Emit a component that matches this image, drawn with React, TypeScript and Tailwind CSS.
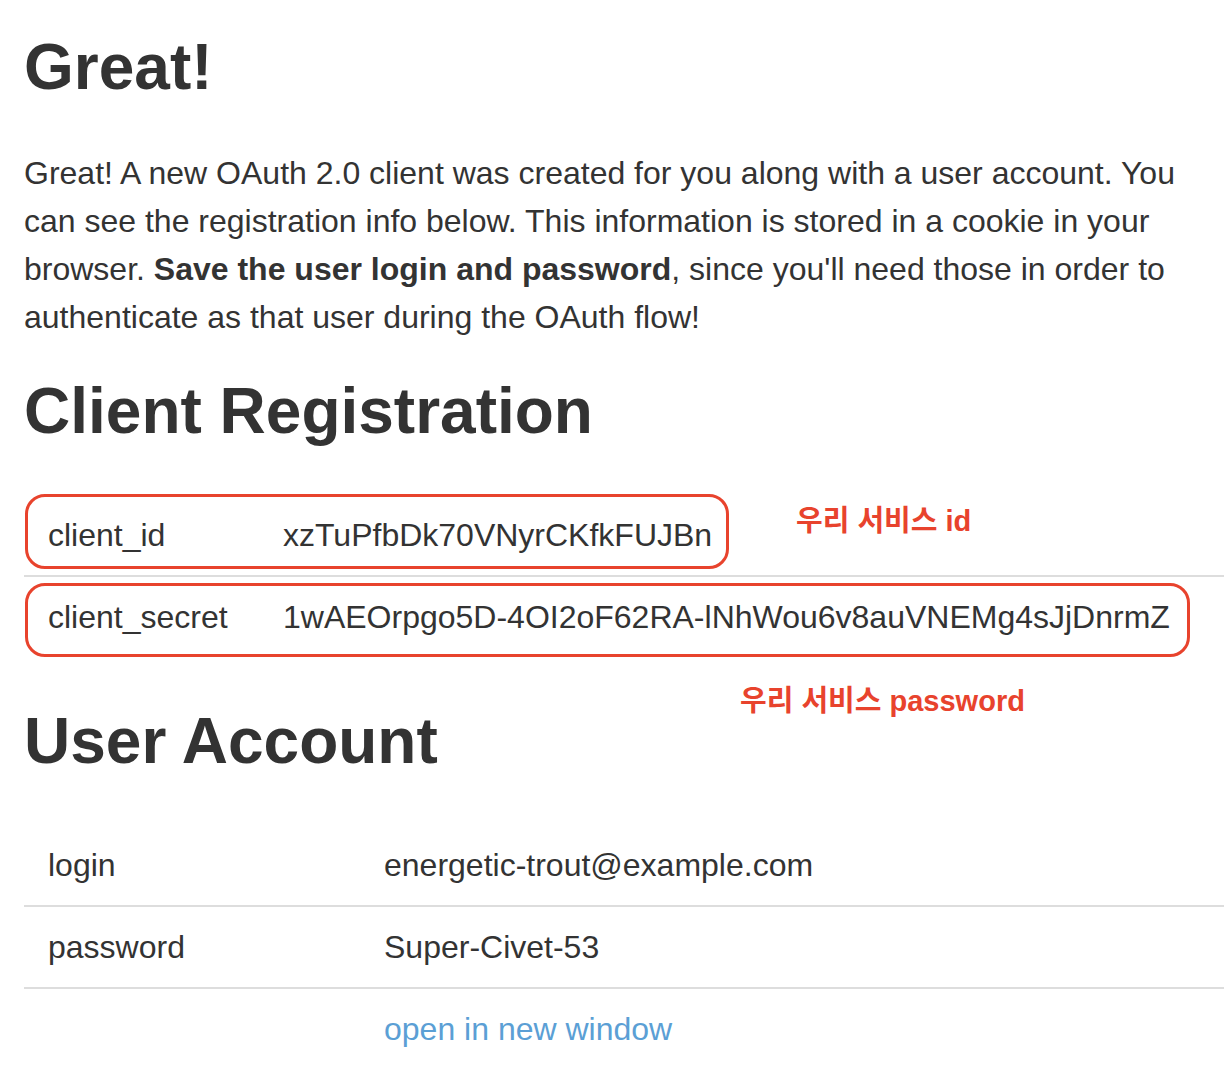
import React from "react";

const Row = ({ label, value, first, col }: { label: React.ReactNode; value: React.ReactNode; first?: boolean; col: string }) => (
  <div className={`flex ${first ? "" : "border-t-2 border-[#dddddd]"}`}>
    <div className={`${col} shrink-0 px-[24px] py-[16px]`}>{label}</div>
    <div className="flex-1 px-[24px] py-[16px] whitespace-nowrap">{value}</div>
  </div>
);

export default function App() {
  return (
    <div
      className="min-h-[1092px] bg-white text-[#333333] text-[32px] leading-[48px]"
      style={{ fontFamily: '"Liberation Sans", Arial, "Noto Sans CJK KR", sans-serif' }}
    >
      <div className="pl-[24px] w-[1224px] pt-[32px]">
        <h1 className="text-[64px] leading-[70px] font-bold">Great!</h1>
        <p className="mt-[47px]">
          Great! A new OAuth 2.0 client was created for you along with a user account. You
          <br />
          can see the registration info below. This information is stored in a cookie in your
          <br />
          browser. <strong className="font-bold">Save the user login and password</strong>, since you'll need those in order to
          <br />
          authenticate as that user during the OAuth flow!
        </p>
        <h2 className="mt-[35px] text-[64px] leading-[70px] font-bold">Client Registration</h2>

        <div className="relative mt-[49px]">
          <Row first col="w-[235px]" label="client_id" value="xzTuPfbDk70VNyrCKfkFUJBn" />
          <Row col="w-[235px]" label="client_secret" value="1wAEOrpgo5D-4OI2oF62RA-lNhWou6v8auVNEMg4sJjDnrmZ" />

          <div className="absolute left-[1px] top-[-1px] w-[704px] h-[75px] border-[3px] border-[#e8432d] rounded-[20px] pointer-events-none" />
          <div className="absolute left-[1px] top-[88px] w-[1165px] h-[74px] border-[3px] border-[#e8432d] rounded-[20px] pointer-events-none" />

          <div
            className="absolute left-[772px] top-[8px] text-[29px] leading-[36px] font-bold text-[#e8432d] whitespace-nowrap"
            style={{ fontFamily: '"Liberation Sans", "Noto Sans CJK KR", sans-serif' }}
          >
            우리 서비스 id
          </div>
          <div
            className="absolute left-[716px] top-[188px] text-[29px] leading-[36px] font-bold text-[#e8432d] whitespace-nowrap"
            style={{ fontFamily: '"Liberation Sans", "Noto Sans CJK KR", sans-serif' }}
          >
            우리 서비스 password
          </div>
        </div>

        <h2 className="mt-[49px] text-[64px] leading-[70px] font-bold">User Account</h2>

        <div className="mt-[49px]">
          <Row first col="w-[336px]" label="login" value="energetic-trout@example.com" />
          <Row col="w-[336px]" label="password" value="Super-Civet-53" />
          <Row
            col="w-[336px]"
            label=""
            value={<a href="#" className="text-[#5b9fd5]">open in new window</a>}
          />
        </div>
      </div>
    </div>
  );
}
